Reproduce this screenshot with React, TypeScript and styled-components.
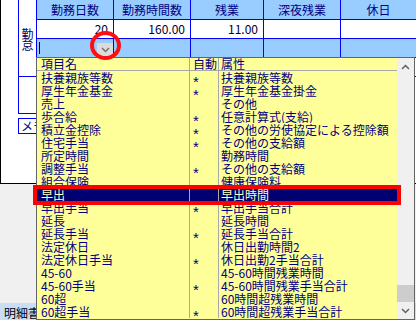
import React from "react";
import styled, { createGlobalStyle } from "styled-components";

// Global

const GlobalStyle = createGlobalStyle`
  html, body {
    margin: 0;
    padding: 0;
  }
  body {
    background: #f0f0f0;
    font-family: "Noto Sans CJK JP", "DejaVu Sans", sans-serif;
    font-size: 12px;
  }
`;

// Data

type Item = [string, boolean, string];

const items: Item[] = [
  ["扶養親族等数", true, "扶養親族等数"],
  ["厚生年金基金", true, "厚生年金基金掛金"],
  ["売上", false, "その他"],
  ["歩合給", true, "任意計算式(支給)"],
  ["積立金控除", true, "その他の労使協定による控除額"],
  ["住宅手当", true, "その他の支給額"],
  ["所定時間", false, "勤務時間"],
  ["調整手当", true, "その他の支給額"],
  ["組合保険", false, "健康保険料"],
  ["早出", false, "早出時間"],
  ["早出手当", true, "早出手当合計"],
  ["延長", false, "延長時間"],
  ["延長手当", true, "延長手当合計"],
  ["法定休日", false, "休日出勤時間2"],
  ["法定休日手当", true, "休日出勤2手当合計"],
  ["45-60", false, "45-60時間残業時間"],
  ["45-60手当", true, "45-60時間残業手当合計"],
  ["60超", false, "60時間超残業時間"],
  ["60超手当", true, "60時間超残業手当合計"],
];

const SELECTED = 9;

const headers = ["勤務日数", "勤務時間数", "残業", "深夜残業", "休日"];
const values = ["20", "160.00", "11.00", "", ""];

// Styles

const Screen = styled.div`
  position: relative;
  width: 416px;
  height: 320px;
  overflow: hidden;
  display: flex;
  flex-direction: column;
  background: #f0f0f0;
`;

const FormPanel = styled.div`
  height: 184px;
  flex-shrink: 0;
  box-sizing: border-box;
  background: #fff;
  border-left: 1px solid #000;
  border-bottom: 1px solid #000;
  display: flex;
`;

const Gutter = styled.div`
  width: 17px;
  flex-shrink: 0;
`;

const Section = styled.div`
  display: flex;
  flex-direction: column;
`;

const AttendanceGrid = styled.div`
  width: 399px;
  box-sizing: border-box;
  display: grid;
  grid-template-columns: 17px 76px 76px 72px 76px 1fr;
  grid-template-rows: 19px 18px 18px 18px;
  gap: 1px;
  background: #0000ff;
  border: 1px solid #0000ff;
  border-top: none;
`;

const LabelCell = styled.div`
  grid-row: 1 / span 4;
  background: #fff;
  color: #000060;
  display: flex;
  flex-direction: column;
  align-items: center;
  justify-content: center;
  line-height: 11px;
  padding-top: 1px;
`;

const HeadCell = styled.div`
  background: #99ccff;
  color: #000080;
  text-align: center;
  line-height: 19px;
`;

const ValueCell = styled.div`
  background: #fff;
  color: #000030;
  text-align: right;
  padding-right: 5px;
  line-height: 18px;
`;

const InputCell = styled.div<{ $blank?: boolean }>`
  background: ${(p) => (p.$blank ? "#fff" : "#99ccff")};
`;

const ComboCell = styled.div`
  background: #99ccff;
  display: flex;
  align-items: center;
  justify-content: space-between;
`;

const Caret = styled.span`
  width: 1px;
  height: 12px;
  margin-left: 2px;
  background: #000;
`;

const DropButton = styled.div`
  width: 16px;
  height: 13px;
  align-self: flex-end;
  margin-bottom: 1px;
  background: #dcdcdc;
  display: flex;
  align-items: center;
  justify-content: center;
`;

const SubBox = styled.div`
  width: 19px;
  height: 37px;
  box-sizing: border-box;
  border: 1px solid #0000ff;
  border-top: none;
`;

const MemoBox = styled.div`
  margin-top: 4px;
  width: 70px;
  height: 16px;
  box-sizing: border-box;
  border: 1px solid #0000ff;
  padding-left: 2px;
  color: #000080;
  line-height: 14px;
`;

const Filler = styled.div`
  flex: 1;
`;

const TabStrip = styled.div`
  height: 17px;
  flex-shrink: 0;
  background: #c9def5;
  padding-left: 4px;
  line-height: 19px;
  color: #000;
`;

const Dropdown = styled.div`
  position: absolute;
  left: 36px;
  top: 57px;
  width: 379px;
  height: 263px;
  box-sizing: border-box;
  border: 1px solid #646464;
  background: #ffff99;
  display: flex;
`;

const ItemList = styled.div`
  flex: 1;
  display: flex;
  flex-direction: column;
  color: #000080;
`;

const ListRow = styled.div<{ $header?: boolean; $selected?: boolean }>`
  display: grid;
  grid-template-columns: 153px 29px 1fr;
  height: 13px;
  box-sizing: border-box;
  line-height: ${(p) => (p.$header ? "12px" : "13px")};
  white-space: nowrap;
  background: ${(p) => (p.$selected ? "#000070" : "transparent")};
  color: ${(p) => (p.$selected ? "#ffffc8" : "#000080")};
  border-bottom: ${(p) => (p.$header ? "1px solid #a8a8a8" : "none")};
`;

const ListCell = styled.div<{ $pad: number; $last?: boolean }>`
  padding-left: ${(p) => p.$pad}px;
  border-right: ${(p) => (p.$last ? "none" : "1px solid #a8a8a8")};
  overflow: hidden;
`;

const AutoMark = styled.span`
  font-family: "Liberation Sans", sans-serif;
  font-size: 15px;
  display: inline-block;
  vertical-align: -4px;
`;

const Scrollbar = styled.div`
  width: 17px;
  flex-shrink: 0;
  background: #f0f0f0;
  display: flex;
  flex-direction: column;
`;

const ArrowButton = styled.div`
  height: 17px;
  display: flex;
  align-items: center;
  justify-content: center;
`;

const Track = styled.div`
  flex: 1;
  display: flex;
  flex-direction: column;
  justify-content: flex-end;
`;

const Thumb = styled.div`
  height: 17px;
  background: #cdcdcd;
`;

const RowMark = styled.div`
  position: absolute;
  left: 33px;
  top: 185px;
  width: 368px;
  height: 20px;
  box-sizing: border-box;
  border: 4px solid #ff0000;
`;

const ButtonMark = styled.div`
  position: absolute;
  left: 90px;
  top: 31px;
  width: 31px;
  height: 29px;
  box-sizing: border-box;
  border: 4px solid #ff1010;
  border-radius: 50%;
`;

// Icons

const Chevron: React.FC<{ up?: boolean; color?: string }> = ({ up, color = "#606060" }) => (
  <svg width="9" height="6" viewBox="0 0 9 6">
    <polyline
      points={up ? "1,5 4.5,1.5 8,5" : "1,1 4.5,4.5 8,1"}
      fill="none"
      stroke={color}
      strokeWidth="1.5"
    />
  </svg>
);

// Component

const App: React.FC = () => {
  return (
    <>
      <GlobalStyle />
      <Screen>
        <FormPanel>
          <Gutter />
          <Section>
            <AttendanceGrid>
              <LabelCell>
                <span>勤</span>
                <span>怠</span>
              </LabelCell>
              {headers.map((h) => (
                <HeadCell key={h}>{h}</HeadCell>
              ))}
              {values.map((v, i) => (
                <ValueCell key={i}>{v}</ValueCell>
              ))}
              <ComboCell>
                <Caret />
                <DropButton>
                  <Chevron color="#707070" />
                </DropButton>
              </ComboCell>
              {[1, 2, 3, 4].map((i) => (
                <InputCell key={i} />
              ))}
              {[0, 1, 2, 3, 4].map((i) => (
                <InputCell key={"b" + i} $blank />
              ))}
            </AttendanceGrid>
            <SubBox />
            <MemoBox>メモ</MemoBox>
          </Section>
        </FormPanel>
        <Filler />
        <TabStrip>明細書</TabStrip>

        <Dropdown>
          <ItemList>
            <ListRow $header>
              <ListCell $pad={4}>項目名</ListCell>
              <ListCell $pad={3}>自動</ListCell>
              <ListCell $pad={2} $last>属性</ListCell>
            </ListRow>
            {items.map(([name, auto, attr], i) => (
              <ListRow key={name} $selected={i === SELECTED}>
                <ListCell $pad={4}>{name}</ListCell>
                <ListCell $pad={3}>{auto && <AutoMark>*</AutoMark>}</ListCell>
                <ListCell $pad={2} $last>{attr}</ListCell>
              </ListRow>
            ))}
          </ItemList>
          <Scrollbar>
            <ArrowButton>
              <Chevron up />
            </ArrowButton>
            <Track>
              <Thumb />
            </Track>
            <ArrowButton>
              <Chevron />
            </ArrowButton>
          </Scrollbar>
        </Dropdown>

        <RowMark />
        <ButtonMark />
      </Screen>
    </>
  );
};

export default App;
